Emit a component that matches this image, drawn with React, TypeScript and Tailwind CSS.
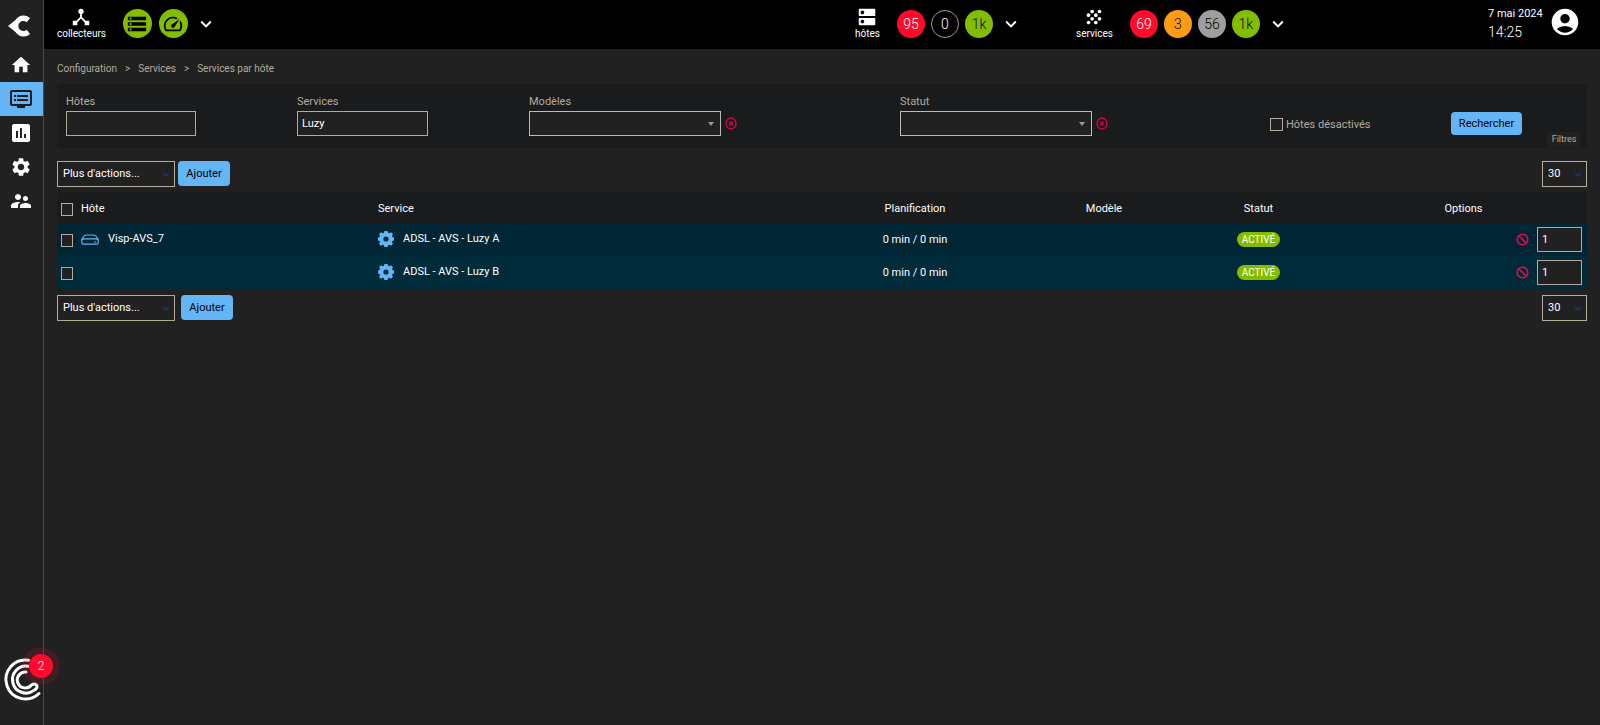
import React from "react";
import {
  MdAccountCircle,
  MdAssessment,
  MdDeviceHub,
  MdDns,
  MdDvr,
  MdExpandMore,
  MdGrain,
  MdHome,
  MdSettings,
  MdSpeed,
  MdStorage,
  MdSupervisorAccount,
} from "react-icons/md";

const field = "border border-[#b5ab9d] bg-[#212121] text-white text-[11px] outline-none";
const blueButton = "rounded bg-[#64b5f6] pt-0.5 text-[11px] text-black";

function Logo() {
  return (
    <svg viewBox="0 0 23 22" className="h-[22px] w-[23px]" aria-hidden="true">
      <path d="M0 11 7.500 5C9 2.200 12 .4 15.500 .4c2.500 0 4.800.9 6.500 2.500L18.700 7.200A5.200 5.200 0 0 0 15.300 6a5 5 0 0 0 0 10c1.300 0 2.500-.5 3.400-1.300L22 19a9.400 9.400 0 0 1-6.500 2.500c-3.500 0-6.500-1.800-8-4.500Z" fill="#fff" />
    </svg>
  );
}

function Counter({ value, tone }: { value: string; tone: string }) {
  return (
    <a href="#" className={`flex size-7 items-center justify-center rounded-full text-sm font-light ${tone}`}>
      {value}
    </a>
  );
}

function Chevron({ label }: { label: string }) {
  return (
    <button aria-label={label} className="text-white">
      <MdExpandMore className="size-[22px]" />
    </button>
  );
}

function Heading({ icon, label }: { icon: React.ReactNode; label: string }) {
  return (
    <div className="flex flex-col items-center pb-0.5 text-[10px] leading-3 text-white">
      {icon}
      <span>{label}</span>
    </div>
  );
}

function SmallSelect({ label, value, width }: { label: string; value: string; width: string }) {
  return (
    <div className={`grid items-center ${width}`}>
      <select aria-label={label} className={`${field} col-start-1 row-start-1 h-[26px] w-full appearance-none px-[5px]`}>
        <option>{value}</option>
      </select>
      <svg viewBox="0 0 8 5" className="pointer-events-none col-start-1 row-start-1 mr-[5px] h-[5px] w-2 justify-self-end" aria-hidden="true">
        <path d="M1 1 4 4 7 1" fill="none" stroke="#17366b" strokeWidth="1.700" />
      </svg>
    </div>
  );
}

function Toolbar({ gap }: { gap: string }) {
  return (
    <div className="flex items-start justify-between">
      <div className={`flex ${gap}`}>
        <SmallSelect label="Plus d'actions" value="Plus d'actions..." width="w-[118px]" />
        <button className={`${blueButton} h-[25px] w-[52px]`}>Ajouter</button>
      </div>
      <SmallSelect label="Lignes par page" value="30" width="w-[45px]" />
    </div>
  );
}

function FilterSelect({ id, label }: { id: string; label: string }) {
  return (
    <div>
      <label htmlFor={id} className="block leading-[14px]">{label}</label>
      <div className="mt-0.5 flex items-center gap-1">
        <div className="grid w-[192px] items-center">
          <select id={id} className="col-start-1 row-start-1 h-[25px] w-full appearance-none border border-[#bbb] bg-[#212121] px-1 text-white">
            <option></option>
          </select>
          <svg viewBox="0 0 6 4" className="pointer-events-none col-start-1 row-start-1 mr-[7px] h-1 w-1.5 justify-self-end" aria-hidden="true">
            <path d="M0 0h6L3 4Z" fill="#999" />
          </svg>
        </div>
        <button type="button" aria-label={`Effacer ${label}`}>
          <svg viewBox="0 0 12 13" className="h-[13px] w-3" fill="none" stroke="#d5093d" aria-hidden="true">
            <ellipse cx="6" cy="6.500" rx="5" ry="5.500" strokeWidth="1.300" />
            <path d="m4.300 4.700 3.400 3.600m0-3.600L4.300 8.300" strokeWidth="1.300" />
          </svg>
        </button>
      </div>
    </div>
  );
}

function Gear() {
  return (
    <svg viewBox="0 0 16 16" className="size-4 shrink-0" aria-hidden="true">
      <path
        fillRule="evenodd"
        fill="#64b5f6"
        d="M6.400 0h3.200l.5 1.700 1.100.5 1.800-1 2 2-1 1.700.4 1.200 1.600.4v3l-1.600.4-.4 1.200 1 1.700-2 2-1.800-1-1.100.5-.5 1.700H6.400l-.5-1.700-1.100-.5-1.800 1-2-2 1-1.700-.4-1.200L0 9.500v-3l1.600-.4L2 4.900 1 3.200l2-2 1.800 1 1.100-.5ZM8 5.400a2.600 2.600 0 1 0 0 5.200 2.600 2.600 0 0 0 0-5.200Z"
      />
    </svg>
  );
}

function HostIcon() {
  return (
    <svg viewBox="0 0 18 11" className="h-[11px] w-[18px] shrink-0" fill="none" stroke="#64b5f6" strokeWidth="1.200" aria-hidden="true">
      <path d="M.8 5.800C2 2.500 4 1 6 1h6c2 0 4 1.500 5.200 4.800v2.700c0 1-.7 1.600-1.500 1.600H2.300C1.500 10.100.8 9.500.8 8.500Z" />
      <path d="M1 5.600q1-.8 2.500-.8h11q1.500 0 2.500.8" />
      <path d="M13 8h2" />
    </svg>
  );
}

function Ban() {
  return (
    <svg viewBox="0 0 13 13" className="size-[13px]" fill="none" stroke="#dc0f40" strokeWidth="1.600" aria-hidden="true">
      <circle cx="6.500" cy="6.500" r="5.300" />
      <path d="m2.800 2.800 7.400 7.400" />
    </svg>
  );
}

function Check({ label, size = "h-[13px] w-3" }: { label: string; size?: string }) {
  return (
    <input
      type="checkbox"
      aria-label={label}
      className={`block appearance-none border border-[#b5ab9d] bg-[#212121] checked:bg-[#64b5f6] ${size}`}
    />
  );
}

const navItems = [
  { label: "Accueil", Icon: MdHome, size: "size-[22px]" },
  { label: "Supervision", Icon: MdDvr, size: "size-6", active: true },
  { label: "Rapports", Icon: MdAssessment, size: "size-6" },
  { label: "Configuration", Icon: MdSettings, size: "size-[22px]" },
  { label: "Administration", Icon: MdSupervisorAccount, size: "size-6" },
];

const rows = [
  { host: "Visp-AVS_7", service: "ADSL - AVS - Luzy A", tone: "bg-[#002535]" },
  { host: "", service: "ADSL - AVS - Luzy B", tone: "bg-[#002b3a]" },
];

export default function App() {
  return (
    <div className="flex min-h-screen bg-[#212121] font-['Roboto',sans-serif] text-[11px] text-white">
      <aside className="relative flex w-11 shrink-0 flex-col border-r border-[#484848]">
        <a href="#" aria-label="Centreon" className="flex h-12 items-center pt-1 pl-2">
          <Logo />
        </a>
        <nav className="flex flex-col">
          {navItems.map(({ label, Icon, size, active }) => (
            <a
              key={label}
              href="#"
              aria-label={label}
              className={`flex h-[34px] items-center justify-center pr-0.5 ${active ? "bg-[#64b5f6] text-[#1a1b1d]" : "text-white"}`}
            >
              <Icon className={size} />
            </a>
          ))}
        </nav>
        <button aria-label="Notifications" className="absolute bottom-[22px] left-0 size-14">
          <svg viewBox="0 0 56 56" className="absolute inset-0 size-14" fill="none" stroke="#fff" strokeWidth="3" strokeLinecap="round" aria-hidden="true">
            <path d="M28.500 13.200A19.500 19.500 0 1 0 39 46.500" />
            <path d="M28 19.200A13.500 13.500 0 1 0 34 43.400Q38.500 40.500 36.500 38Q34.500 36 31.500 38A8 8 0 1 1 26 25" />
          </svg>
          <span className="absolute top-[7px] left-[29px] flex size-6 items-center justify-center rounded-full bg-[#ff0a2d] text-xs font-light text-white ring-[7px] ring-[#ff0a2d]/15">2</span>
        </button>
      </aside>

      <div className="min-w-0 flex-1">
        <header className="grid h-[49px] grid-cols-[798fr_221fr_412fr_112px] bg-black pl-[13px]">
          <div className="flex h-[47px] items-center">
            <Heading icon={<MdDeviceHub className="size-[22px]" />} label="collecteurs" />
            <div className="ml-[17px] flex gap-[7px]">
              <a href="#" aria-label="Base de données" className="flex size-[29px] items-center justify-center rounded-full bg-[#84bd00] text-black">
                <MdStorage className="size-[22px]" />
              </a>
              <a href="#" aria-label="Latence" className="flex size-[29px] items-center justify-center rounded-full bg-[#84bd00] text-black">
                <MdSpeed className="size-[22px]" />
              </a>
            </div>
            <div className="ml-[7px] flex"><Chevron label="Détails des collecteurs" /></div>
          </div>
          <div className="flex h-[47px] items-center">
            <Heading icon={<MdDns className="size-[22px]" />} label="hôtes" />
            <div className="ml-[17px] flex gap-[6px]">
              <Counter value="95" tone="bg-[#ff0a2d] text-white" />
              <Counter value="0" tone="border border-[#999] text-white" />
              <Counter value="1k" tone="bg-[#84bd00] text-black" />
            </div>
            <div className="ml-[7px] flex"><Chevron label="Détails des hôtes" /></div>
          </div>
          <div className="flex h-[47px] items-center">
            <Heading icon={<MdGrain className="size-[22px]" />} label="services" />
            <div className="ml-[17px] flex gap-[6px]">
              <Counter value="69" tone="bg-[#ff0a2d] text-white" />
              <Counter value="3" tone="bg-[#fd9b13] text-black" />
              <Counter value="56" tone="bg-[#9e9e9e] text-black" />
              <Counter value="1k" tone="bg-[#84bd00] text-black" />
            </div>
            <div className="ml-[7px] flex"><Chevron label="Détails des services" /></div>
          </div>
          <div className="flex h-[43px] items-center justify-between pr-[19px]">
            <div className="pt-0.5">
              <div className="text-[11px] leading-[18px]">7 mai 2024</div>
              <div className="text-sm leading-[18px] font-light">14:25</div>
            </div>
            <button aria-label="Profil"><MdAccountCircle className="size-8" /></button>
          </div>
        </header>

        <main className="px-[13px]">
          <nav aria-label="Fil d'Ariane" className="flex h-[35px] items-center gap-2 pt-1 text-[10px] text-[#b5ab9d]">
            <a href="#">Configuration</a><span>&gt;</span>
            <a href="#">Services</a><span>&gt;</span>
            <a href="#">Services par hôte</a>
          </nav>

          <form className="relative grid h-16 grid-cols-[231fr_232fr_371fr_370fr_181fr_136fr] items-start rounded bg-[#1a1b1d] pt-[11px] pl-[9px] text-[#b5ab9d]">
            <div>
              <label htmlFor="hosts" className="block leading-[14px]">Hôtes</label>
              <input id="hosts" className={`${field} mt-0.5 block h-[25px] w-[130px] px-1`} />
            </div>
            <div>
              <label htmlFor="services" className="block leading-[14px]">Services</label>
              <input id="services" defaultValue="Luzy" className={`${field} mt-0.5 block h-[25px] w-[131px] px-1`} />
            </div>
            <FilterSelect id="templates" label="Modèles" />
            <FilterSelect id="status" label="Statut" />
            <label className="flex items-center gap-[3px] pt-[23px] leading-[13px]">
              <Check label="Hôtes désactivés" size="size-[13px]" />
              Hôtes désactivés
            </label>
            <div className="pt-[17px]">
              <button type="button" className={`${blueButton} h-[23px] w-[71px]`}>Rechercher</button>
            </div>
            <button type="button" className="absolute right-1.5 bottom-px h-[15px] w-[34px] bg-[#212121] text-[9px]">Filtres</button>
          </form>

          <div className="pt-[13px] pb-[5px]"><Toolbar gap="gap-[3px]" /></div>

          <table className="w-full table-fixed border-separate border-spacing-0 overflow-hidden rounded bg-[#1a1b1d]">
            <colgroup>
              <col className="w-[24px]" />
              <col className="w-[297px]" />
              <col className="w-[421px]" />
              <col className="w-[232px]" />
              <col className="w-[146px]" />
              <col className="w-[163px]" />
              <col className="w-[247px]" />
            </colgroup>
            <thead>
              <tr className="h-[31px] *:p-0 *:pt-1 *:font-normal">
                <th><div className="pl-1"><Check label="Tout sélectionner" /></div></th>
                <th className="text-left">Hôte</th>
                <th className="text-left">Service</th>
                <th>Planification</th>
                <th>Modèle</th>
                <th>Statut</th>
                <th>Options</th>
              </tr>
            </thead>
            <tbody>
              {rows.map((row) => (
                <tr key={row.service} className={`h-[33px] *:p-0 ${row.tone}`}>
                  <td><div className="pt-0.5 pl-1"><Check label={`Sélectionner ${row.service}`} /></div></td>
                  <td>
                    {row.host && (
                      <a href="#" className="flex items-center gap-[9px]">
                        <HostIcon />
                        {row.host}
                      </a>
                    )}
                  </td>
                  <td>
                    <a href="#" className="flex items-center gap-[9px] pb-px">
                      <Gear />
                      {row.service}
                    </a>
                  </td>
                  <td><div className="pt-0.5 text-center">0 min / 0 min</div></td>
                  <td></td>
                  <td>
                    <span className="mx-auto flex h-[15px] w-[43px] items-center justify-center rounded-full bg-[#84bd00] text-[10px]">ACTIVÉ</span>
                  </td>
                  <td>
                    <div className="flex items-center justify-end gap-2 pr-[5px]">
                      <button aria-label="Désactiver"><Ban /></button>
                      <input aria-label="Nombre de duplications" defaultValue="1" className={`${field} h-[25px] w-[45px] px-1`} />
                    </div>
                  </td>
                </tr>
              ))}
            </tbody>
          </table>

          <div className="pt-1.5"><Toolbar gap="gap-1.5" /></div>
        </main>
      </div>
    </div>
  );
}
